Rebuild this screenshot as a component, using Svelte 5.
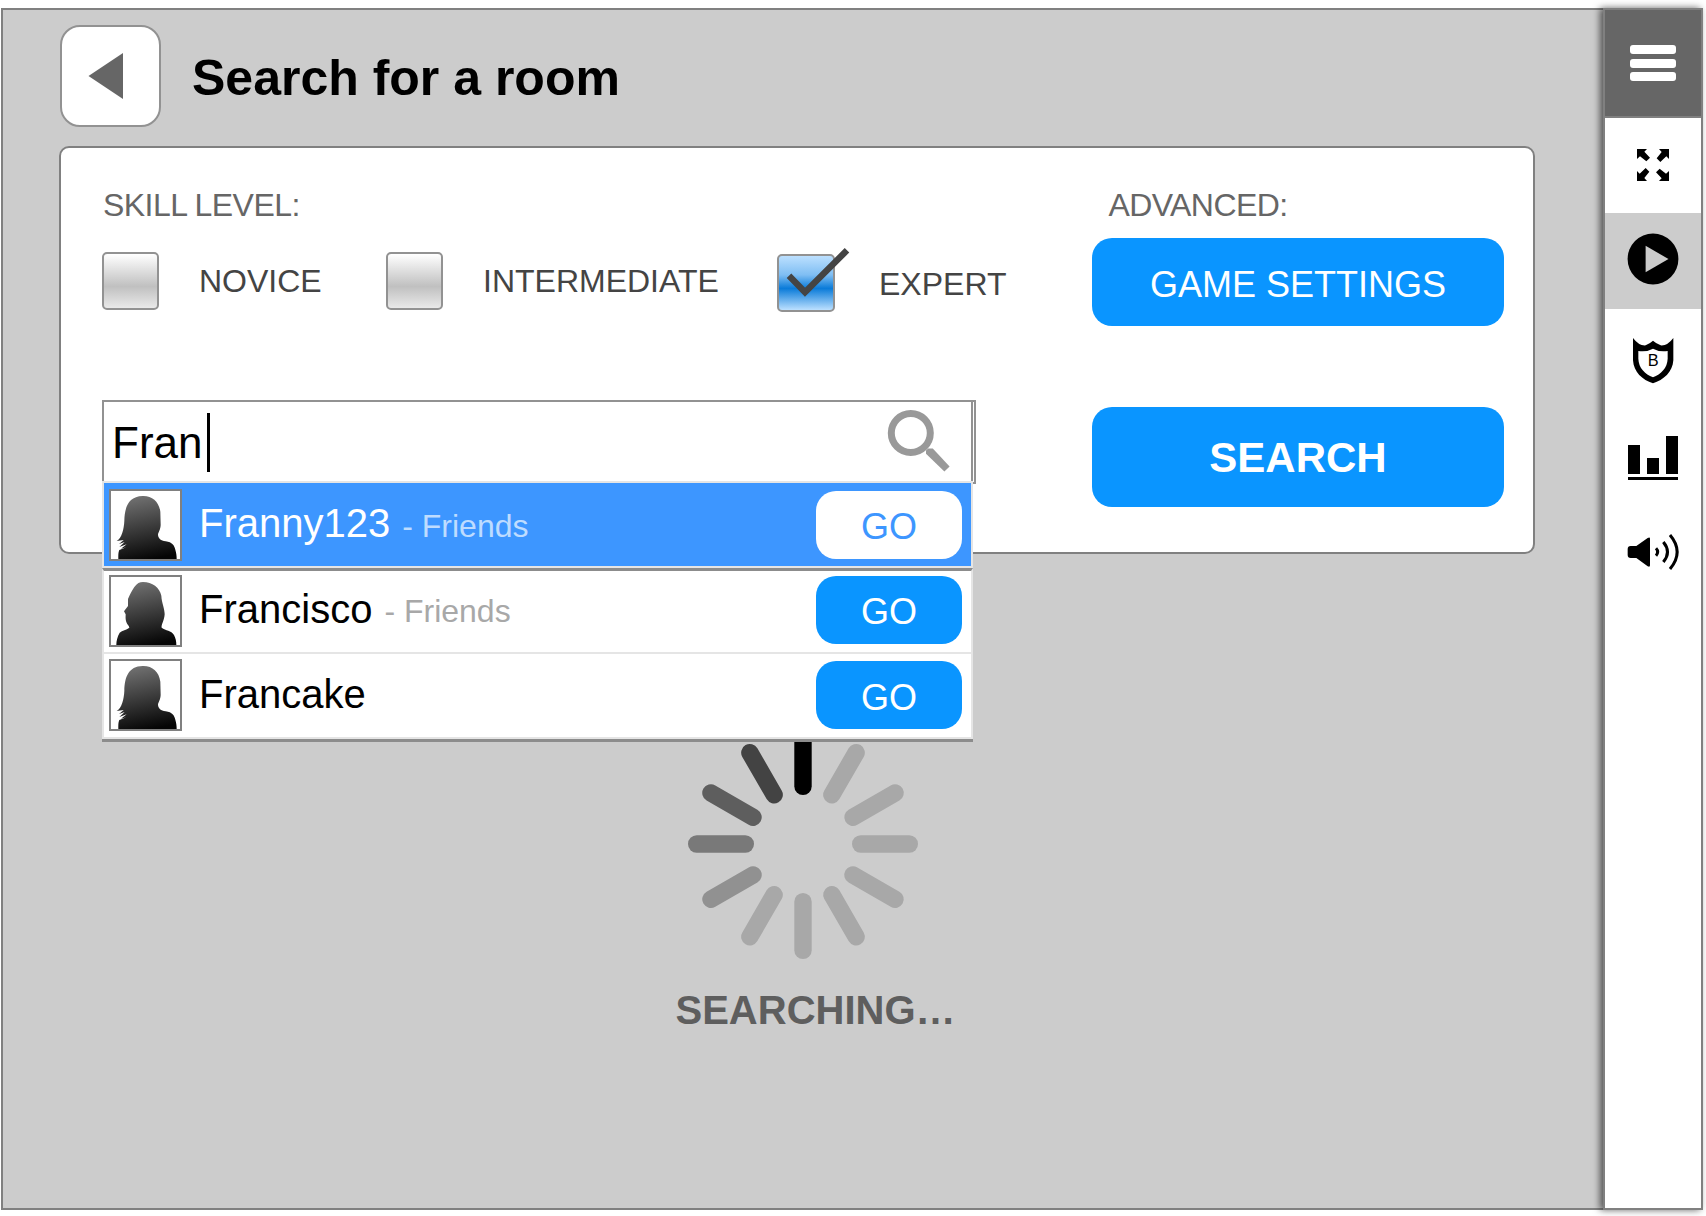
<script>
  let query = $state('Fran');

  const levels = [
    { name: 'NOVICE', checked: false },
    { name: 'INTERMEDIATE', checked: false },
    { name: 'EXPERT', checked: true }
  ];

  const results = [
    { name: 'Franny123', group: 'Friends', avatar: 'long', active: true },
    { name: 'Francisco', group: 'Friends', avatar: 'short', active: false },
    { name: 'Francake', group: '', avatar: 'long', active: false }
  ];

  const silhouettes = {
    long: 'M101 21C130 20 150 38 154 68L155 108C154 125 147 130 147 138C148 148 155 155 170 157C190 159 196 170 199 182C202 192 203 200 203 210H28C28 195 28 190 31 183L52 175L36 179L53 166L31 174L47 159L30 165L44 153L23 156C38 148 45 120 46 95C47 55 58 22 101 21Z',
    short: 'M102 21C130 21 152 38 157 62C158 84 167 100 167 118C166 136 156 150 158 158C170 168 187 165 195 180C200 190 202 198 202 210H22C22 198 25 185 32 173C40 165 52 165 61 158C60 150 54 150 51 138C49 130 50 124 50 118L45 109L57 93L57 72C62 60 68 48 76 36C84 25 92 21 102 21Z'
  };

  const spokes = [
    '#000000', '#a8a8a8', '#a8a8a8', '#a8a8a8', '#a8a8a8', '#a8a8a8',
    '#a8a8a8', '#a8a8a8', '#919191', '#797979', '#5e5e5e', '#434343'
  ];

  // The slanted spokes sit slightly below the true centre of the wheel.
  const drop = [0, 0.7, 2.1];
  const dropFor = (i) => drop[[0, 1, 2, 0, 2, 1][i % 6]];
</script>

<div class="app">
  <main class="stage">
    <header class="top">
      <button class="back" aria-label="Back">
        <svg width="36" height="48" viewBox="0 0 36 48"><path d="M0.5 24L35 1V47Z" fill="#666" /></svg>
      </button>
      <h1>Search for a room</h1>
    </header>

    <section class="panel">
      <div class="filters">
        <div class="label skill">SKILL LEVEL:</div>
        <div class="levels">
          {#each levels as level}
            <div class="level" class:on={level.checked}>
              <span class="box">
                {#if level.checked}
                  <svg class="check" width="58" height="58" viewBox="0 0 58 58">
                    <path d="M12 21.8L28 38.2L70 -3.7" fill="none" stroke="#444" stroke-width="6.4" />
                  </svg>
                {/if}
              </span>
              <span class="level-name">{level.name}</span>
            </div>
          {/each}
        </div>

        <div class="search">
          <div class="field">
            <span class="query">{query}</span><span class="caret"></span>
            <svg class="glass" width="50" height="50" viewBox="0 0 50 50">
              <circle cx="23.8" cy="23" r="19.5" fill="none" stroke="#999" stroke-width="7" />
              <path d="M39 40.5L41.2 38.6H45.8L62.6 56.4L57.4 61.6L39 43.8Z" fill="#999" />
            </svg>
          </div>
          <div class="gutter"></div>

          <ul class="results">
            {#each results as result}
              <li class="result" class:active={result.active}>
                <svg class="avatar" width="73" height="72" viewBox="0 0 219 216">
                  <defs>
                    <linearGradient id="shade" x1="0.4" y1="0" x2="0.6" y2="1">
                      <stop offset="0" stop-color="#707070" />
                      <stop offset="1" stop-color="#050505" />
                    </linearGradient>
                  </defs>
                  <rect width="219" height="216" rx="3" fill="#fff" />
                  <path d={silhouettes[result.avatar]} fill="url(#shade)" />
                  <rect x="3" y="3" width="213" height="210" fill="none" stroke="#808080" stroke-width="6" />
                </svg>
                <span class="name">{result.name}</span>
                {#if result.group}<span class="group">- {result.group}</span>{/if}
                <button class="go">GO</button>
              </li>
            {/each}
          </ul>
        </div>
      </div>

      <div class="actions">
        <div class="label advanced">ADVANCED:</div>
        <button class="settings">GAME SETTINGS</button>
        <button class="submit">SEARCH</button>
      </div>
    </section>

    <svg class="spinner" width="230" height="230" viewBox="-115 -115 230 230">
      {#each spokes as color, i}
        <rect x="-8.7" y="-115" width="17.4" height="66" rx="8.7" fill={color} transform="translate(0 {dropFor(i)}) rotate({i * 30})" />
      {/each}
    </svg>
    <p class="status">SEARCHING…</p>
  </main>

  <nav class="rail">
    <button class="menu" aria-label="Menu"><i></i><i></i><i></i></button>
    <button class="item expand" aria-label="Full screen">
      <svg width="32" height="32" viewBox="0 0 96 96">
        {#each [0, 90, 180, 270] as angle}
          <path d="M0 0H30L22 8L39 26L28 37L9 22L0 30Z" transform="rotate({angle} 48 48)" />
        {/each}
      </svg>
    </button>
    <button class="item current" aria-label="Play">
      <svg width="52" height="52" viewBox="-26 -26 52 52">
        <circle r="25.4" />
        <path d="M-7.4 -13.2L15.5 0L-7.4 13.2Z" fill="#ccc" />
      </svg>
    </button>
    <button class="item shield" aria-label="Badges">
      <svg width="41" height="46" viewBox="0 0 123 138">
        <path fill-rule="evenodd" d="M0 0Q18 24 38 22Q50 17 60 8Q70 17 83 22Q103 24 121 0V67C119 102 92 126 60 136C28 126 2 102 0 67ZM16 39V62C17 90 36 108 60 118C84 108 103 90 104 62V39Q80 43 60 32Q40 43 16 39Z" />
        <text x="60.5" y="85" text-anchor="middle" font-size="49">B</text>
      </svg>
    </button>
    <button class="item stats" aria-label="Statistics">
      <svg width="50" height="44" viewBox="0 0 50 44">
        <path d="M0 9H12V38H0ZM19 22H31V38H19ZM38 0H50V38H38ZM0 41H50V44H0Z" />
      </svg>
    </button>
    <button class="item sound" aria-label="Sound">
      <svg width="52" height="36" viewBox="0 0 156 108">
        <path d="M11 36H28L62 12Q69 8 69 14V94Q69 101 62 97L28 72H11Q2 72 2 63V45Q2 36 11 36Z" />
        <g fill="none" stroke="#000" stroke-width="9">
          <path d="M87 43Q97 54 87 65" />
          <path d="M109 24Q134 54 109 84" />
          <path d="M129 3Q172 54 129 105" />
        </g>
      </svg>
    </button>
  </nav>
</div>

<style>
  :global(body) { background: #fff; }
  .app, .app :global(*) { box-sizing: border-box; }
  button {
    font: inherit; border: 0; margin: 0; padding: 0; background: none; color: inherit;
    display: flex; align-items: center; justify-content: center;
  }
  svg { display: block; overflow: visible; }
  .app {
    width: 1706px; height: 1216px; padding: 8px 3px 6px 1px; display: flex;
    font-family: "Liberation Sans", Arial, sans-serif; background: #fff; overflow: hidden;
  }
  .stage {
    width: 1602px; background: #ccc; border: 2px solid #808080; border-right: 0;
    padding-top: 15px;
  }
  .top { display: flex; height: 102px; padding-left: 57px; }
  .back {
    width: 101px; height: 102px; background: #fff; border: 2px solid #929292; border-radius: 20px;
    padding-right: 9px;
  }
  h1 {
    margin: 0 0 0 31px; font-size: 50px; line-height: 107px; font-weight: bold; color: #000;
    white-space: nowrap;
  }
  .panel {
    width: 1476px; height: 408px; margin: 19px 0 0 56px; padding: 39px 29px 0 41px;
    background: #fff; border: 2px solid #808080; border-radius: 10px;
    display: flex; justify-content: space-between;
  }
  .label { font-size: 32px; line-height: 36px; color: #666; white-space: nowrap; }
  .skill { letter-spacing: -0.55px; padding-left: 1px; }
  .levels { display: grid; grid-template-columns: 284px 391px auto; margin-top: 29px; height: 60px; }
  .level { display: flex; gap: 40px; }
  .level.on { padding-top: 2px; gap: 44px; }
  .box {
    width: 57px; height: 58px; border: 2px solid #929292; border-radius: 5px;
    background: linear-gradient(#fff 0%, #c0c0c0 60%, #e9e9e9 100%);
  }
  .on .box {
    width: 58px;
    background: linear-gradient(#bce0ff 0%, #7fbef3 35%, #0a7bd9 60%, #bce0ff 100%);
  }
  .check { margin: -2px 0 0 -2px; }
  .level-name { font-size: 32px; line-height: 58px; color: #444; white-space: nowrap; }
  .on .level-name { line-height: 60px; }
  .search { position: relative; display: flex; width: 874px; height: 84px; margin-top: 88px; }
  .field {
    width: 871px; border: 2px solid #929292; padding-left: 8px; display: flex; background: #fff;
  }
  .query { font-size: 44px; line-height: 82px; color: #000; }
  .caret { width: 3px; height: 59px; margin: 11px 0 0 5px; background: #000; }
  .glass { margin: 8px 34px 0 auto; }
  .gutter { width: 3px; border: 2px solid #929292; border-width: 2px 2px 2px 0; background: #fff; }
  .results {
    position: absolute; left: 0; top: 81px; width: 871px; margin: 0; padding: 0; list-style: none;
    border-bottom: 3px solid #8c8c8c; z-index: 2;
  }
  .result {
    display: flex; align-items: flex-start; background: #fff;
    border: solid #e5e5e5; border-width: 0 2px 2px; height: 83px; padding: 4px 9px 0 5px;
  }
  .result.active {
    height: 87px; background: #3d96ff; border-width: 2px; padding-top: 6px; color: #fff;
  }
  .result:nth-child(2) { border-top: 3px solid #8c8c8c; height: 86px; }
  .result:nth-child(3) { height: 85px; padding-top: 5px; }
  .name { font-size: 40px; line-height: 68px; margin-left: 17px; }
  .result:nth-child(3) .name { line-height: 70px; }
  .group { font-size: 32px; line-height: 74px; margin-left: 12px; color: #a8a8a8; }
  .result:nth-child(2) .group { line-height: 72px; }
  .active .group { color: #bedcff; }
  .go {
    width: 146px; height: 68px; margin: 2px 0 0 auto; padding-top: 3px; border-radius: 20px;
    background: #0a95ff; color: #fff; font-size: 36px;
  }
  .result:nth-child(2) .go { margin-top: 1px; }
  .result:nth-child(3) .go { padding-top: 5px; }
  .active .go { background: #fff; color: #3d96ff; }
  .actions { width: 412px; color: #fff; }
  .advanced { padding-left: 16.5px; letter-spacing: -0.6px; }
  .settings, .submit { width: 412px; border-radius: 20px; background: #0a95ff; }
  .settings { height: 88px; margin-top: 15px; padding-top: 5px; font-size: 36px; }
  .submit { height: 100px; margin-top: 81px; padding-top: 1px; font-size: 42px; font-weight: bold; }
  .spinner { margin: 175px 0 0 685px; }
  .status {
    margin: 28px 0 0 672.5px; font-size: 40px; line-height: 46px; font-weight: bold; color: #5e5e5e;
  }
  .rail {
    width: 100px; background: #fff; border: 2px solid #808080; z-index: 1;
    box-shadow: -3px 0 7px rgba(0, 0, 0, 0.6);
  }
  .menu {
    width: 96px; height: 108px; background: #666; border-bottom: 2px solid #808080;
    flex-direction: column; gap: 4.5px;
  }
  .menu i { width: 46px; height: 9px; border-radius: 3px; background: #fff; }
  .item { width: 96px; height: 95px; }
  .expand { padding-bottom: 1px; }
  .current { height: 96px; background: #ccc; padding-bottom: 4px; }
  .shield { height: 103px; }
  .stats { height: 92px; }
  .sound { height: 96px; }
</style>
